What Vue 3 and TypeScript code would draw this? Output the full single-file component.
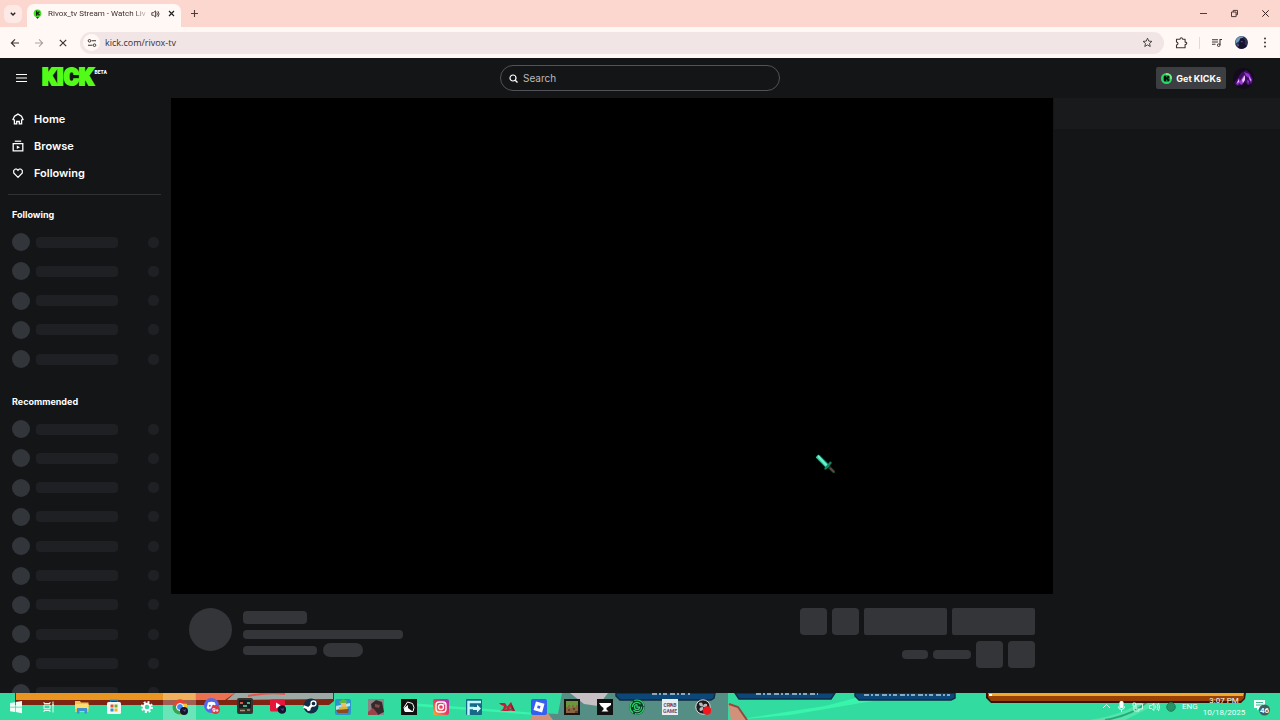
<script setup lang="ts">
import { ref } from 'vue'

const address = ref('kick.com/rivox-tv')
const query = ref('')

const followed = 5
const recommended = 10
</script>

<template>
  <div class="desktop">
    <div class="tabstrip">
      <button class="tab-search" aria-label="Search tabs">
        <svg width="8" height="8" viewBox="0 0 8 8"><path d="M1.8 2.8 4 5l2.2-2.2" fill="none" stroke="#222" stroke-width="1.4" /></svg>
      </button>
      <div class="tab">
        <svg class="favicon" width="9" height="10" viewBox="0 0 9 10">
          <circle cx="4.5" cy="4.4" r="3.8" fill="#3ee11f" />
          <path d="M3 1.8h1.3v1.4h1V2.4h1.3v1.4h-.9v1.2h.9v1.5H5.3v-1h-1v1.3H3z" fill="#10230c" />
          <path d="M3 8h3L4.5 10z" fill="#26361d" />
        </svg>
        <span class="tab-title">Rivox_tv Stream - Watch Liv</span>
        <button class="plain" aria-label="Mute tab">
          <svg width="9" height="8" viewBox="0 0 9 8"><path d="M.8 2.7h1.6L4.6.9v6.2L2.4 5.3H.8zM5.8 2.4q1.2 1.6 0 3.2M6.9 1.1q2.4 2.9 0 5.8" fill="none" stroke="#554b49" stroke-width="1" /></svg>
        </button>
        <button class="plain tab-close" aria-label="Close tab">
          <svg width="7" height="7" viewBox="0 0 7 7"><path d="m1 1 5 5m0-5L1 6" stroke="#222" stroke-width="1.2" /></svg>
        </button>
      </div>
      <button class="plain new-tab" aria-label="New tab">
        <svg width="9" height="9" viewBox="0 0 9 9"><path d="M4.5 1v7M1 4.5h7" stroke="#4c3b38" stroke-width="1.1" /></svg>
      </button>
      <div class="window-buttons">
        <button class="plain" aria-label="Minimize"><svg width="9" height="9" viewBox="0 0 9 9"><path d="M1 4.5h7" stroke="#4c3b38" /></svg></button>
        <button class="plain" aria-label="Restore"><svg width="9" height="9" viewBox="0 0 9 9"><path d="M1.5 3h4.6v4.6H1.5zM3.2 3V1.4h4.3v4.3H6.1" fill="none" stroke="#4c3b38" /></svg></button>
        <button class="plain" aria-label="Close"><svg width="9" height="9" viewBox="0 0 9 9"><path d="m1.3 1.3 6.4 6.4m0-6.4-6.4 6.4" stroke="#33211f" /></svg></button>
      </div>
    </div>

    <div class="toolbar">
      <div class="nav-buttons">
        <button class="plain" aria-label="Back"><svg width="10" height="10" viewBox="0 0 10 10"><path d="M9 5H1.6M5 1.4 1.4 5 5 8.6" fill="none" stroke="#3b3635" stroke-width="1.2" /></svg></button>
        <button class="plain" aria-label="Forward"><svg width="10" height="10" viewBox="0 0 10 10"><path d="M1 5h7.4M5 1.4 8.6 5 5 8.6" fill="none" stroke="#a9a4a3" stroke-width="1.1" /></svg></button>
        <button class="plain" aria-label="Stop"><svg width="10" height="10" viewBox="0 0 10 10"><path d="m1.8 1.8 6.4 6.4m0-6.4-6.4 6.4" stroke="#3b3635" stroke-width="1.2" /></svg></button>
      </div>
      <div class="omnibox">
        <button class="site-info" aria-label="Site information">
          <svg width="10" height="10" viewBox="0 0 10 10"><path d="M4.6 2.8H9M1 7.2h4.4" stroke="#3b3635" stroke-width="1.1" /><circle cx="2.5" cy="2.8" r="1.3" fill="none" stroke="#3b3635" /><circle cx="7.5" cy="7.2" r="1.3" fill="none" stroke="#3b3635" /></svg>
        </button>
        <input v-model="address" class="address" type="text" aria-label="Address" />
        <button class="plain" aria-label="Bookmark">
          <svg width="11" height="11" viewBox="0 0 11 11"><path d="m5.5 1.2 1.25 2.9 3.15.3-2.4 2.05.75 3.05L5.5 7.9 2.75 9.5l.75-3.05L1.1 4.4l3.15-.3z" fill="none" stroke="#3b3635" stroke-width=".9" /></svg>
        </button>
      </div>
      <button class="plain extensions" aria-label="Extensions">
        <svg width="13" height="12" viewBox="0 0 13 12"><path d="M1.5 2.2H5Q5.2.7 6.3.7T7.6 2.2h2.5v2.9q1.7.1 1.7 1.2t-1.7 1.3v3.2H1.5V8Q3 7.6 3 6.5T1.5 5z" fill="none" stroke="#3b3635" stroke-width="1.1" stroke-linejoin="round" /></svg>
      </button>
      <span class="toolbar-rule"></span>
      <div class="toolbar-end">
        <button class="plain" aria-label="Media controls">
          <svg width="12" height="10" viewBox="0 0 12 10"><path d="M1 1.7h6M1 4h6M1 6.3h3.5M9 7V1.5h2" fill="none" stroke="#3b3635" stroke-width="1.1" /><circle cx="7.7" cy="7.2" r="1.3" fill="none" stroke="#3b3635" /></svg>
        </button>
        <button class="plain" aria-label="Profile">
          <svg width="13" height="13" viewBox="0 0 13 13"><circle cx="6.5" cy="6.5" r="6.5" fill="#2c3154" /><path d="M1.2 3.5a6.5 6.5 0 0 1 8-2.900L6 3 3 6 .2 8z" fill="#6e9dc4" /><path d="M5 2.6 8 2l2 2.5-.5 3.5L12 10a6.5 6.5 0 0 1-9 1.5L4 8z" fill="#15132d" /><path d="m5.5 5 2.5.5-1 1zM2 8l2 1-1 1.5z" fill="#8b5bb8" /></svg>
        </button>
        <button class="plain" aria-label="Menu">
          <svg width="4" height="11" viewBox="0 0 4 11"><circle cx="2" cy="1.5" r="1" fill="#3b3635" /><circle cx="2" cy="5.5" r="1" fill="#3b3635" /><circle cx="2" cy="9.5" r="1" fill="#3b3635" /></svg>
        </button>
      </div>
    </div>

    <div class="site">
      <header class="site-header">
        <div class="brand">
          <button class="plain" aria-label="Toggle sidebar">
            <svg width="11" height="10" viewBox="0 0 11 10"><path d="M0 1.500h11M0 5h11M0 8.500h11" stroke="#fff" stroke-width="1.200" /></svg>
          </button>
          <a class="logo" href="#">KICK<sup>BETA</sup></a>
        </div>
        <label class="search">
          <svg width="9" height="9" viewBox="0 0 9 9"><circle cx="4" cy="4" r="3" fill="none" stroke="#fff" stroke-width="1.2" /><path d="m6.2 6.2 2.3 2.3" stroke="#fff" stroke-width="1.3" /></svg>
          <input v-model="query" type="search" placeholder="Search" aria-label="Search" />
        </label>
        <div class="account">
          <button class="get-kicks">
            <svg width="11" height="11" viewBox="0 0 11 11"><circle cx="5.5" cy="5.5" r="5.5" fill="#26dd62" /><path d="M5.5 0A5.5 5.5 0 0 1 11 5.5L8 7 4 3z" fill="#75f08a" /><circle cx="5.5" cy="5.5" r="3.6" fill="#15924c" /><path d="M3 2.7h2v1.6h.8v-.8h.8v-.8h1.700v2h-.8v1.500h.8v2H6.600v-.8h-.8v-.8H5v1.700H3z" fill="#07110b" /></svg>
            Get KICKs
          </button>
          <button class="plain" aria-label="Account">
            <svg width="21" height="21" viewBox="0 0 21 21"><circle cx="10.5" cy="10.5" r="10.5" fill="#140a1c" /><path d="m1 15 3-4 4-6 5-3 4 3 3 6-1 5-4 1-3-3-4 3-4 1z" fill="#3c1060" /><path d="m3 16 3-6 1 3 4-6 1 4-3 6-3-2-1 2zM11 4l5 2 3 6-1 3-2-5-3-2zM14 12l2 1-1 4z" fill="#9b35d8" /><path d="m4 15 2-4v3zM9 12l3-5v5l-2 3zM16 8l2 4-1 1z" fill="#eec5ff" /></svg>
          </button>
        </div>
      </header>

      <div class="site-body">
        <aside class="sidebar">
          <nav>
            <a href="#"><svg width="12" height="12" viewBox="0 0 12 12"><path d="M6 1.1 9.5 3.3 11 6.6 9.6 7v3.800H7.300V8.500H4.700v2.300H2.400V7L1 6.600l1.500-3.300z" fill="none" stroke="#fff" stroke-width="1.300" /></svg>Home</a>
            <a href="#"><svg width="12" height="12" viewBox="0 0 12 12"><path d="M2.8 1.2h6.4" stroke="#fff" stroke-width="1.2" /><path d="M1.2 3.7h9.6v7.2H1.2z" fill="none" stroke="#fff" stroke-width="1.3" /><path d="m4.8 5.5 3.2 1.8-3.2 1.8z" fill="#fff" /></svg>Browse</a>
            <a href="#"><svg width="12" height="12" viewBox="0 0 12 12"><path d="M6 10.3 1.7 5.9V3.4L3.3 2h1.4L6 3.3 7.3 2h1.4l1.6 1.4v2.5z" fill="none" stroke="#fff" stroke-width="1.2" /></svg>Following</a>
          </nav>
          <h2>Following</h2>
          <ul class="channels followed">
            <li v-for="n in followed" :key="n"><i class="dot"></i><i class="bar"></i><i class="count"></i></li>
          </ul>
          <h2>Recommended</h2>
          <ul class="channels recommended">
            <li v-for="n in recommended" :key="n"><i class="dot"></i><i class="bar"></i><i class="count"></i></li>
          </ul>
        </aside>

        <main class="stream">
          <div class="video"></div>
          <div class="details">
            <i class="bone avatar"></i>
            <div class="lines">
              <i class="bone name"></i>
              <i class="bone title"></i>
              <div class="tags"><i class="bone tag"></i><i class="bone pill"></i></div>
            </div>
            <div class="actions">
              <div class="action-row"><i class="bone square"></i><i class="bone square"></i><i class="bone wide"></i><i class="bone wide"></i></div>
              <div class="action-row"><i class="bone stat"></i><i class="bone stat long"></i><i class="bone square"></i><i class="bone square"></i></div>
            </div>
          </div>
        </main>

        <aside class="chat"><div class="chat-head"></div></aside>
      </div>
    </div>

    <footer class="taskbar">
      <svg class="wallpaper" viewBox="0 0 1280 27" preserveAspectRatio="none" aria-hidden="true">
        <rect width="1280" height="27" fill="#32dca0" />
        <path d="M410 10 550 21v2L400 12zM735 27l90-14 50-13h45L790 22z" fill="#39f5ac" />
        <path d="M1090 27q35-6 50-18l25-2-40 20z" fill="#55e5aa" />
        <path d="M1105 27q28-5 42-18" fill="none" stroke="#22ac7d" stroke-width="2" />
        <path d="M15 0h319v8l-5 4H15z" fill="#7d2412" />
        <path d="M16 0h179v7H16z" fill="#eb9521" />
        <path d="M195 0h40l-10 7h-30z" fill="#ed7050" />
        <path d="M235 0h98v6l-106 1z" fill="#9ca9a5" />
        <path d="M248 3q20-4 37-2" stroke="#e05a49" stroke-width="2" fill="none" />
        <path d="M562 0h166v27H530l8-7 20 1z" fill="#548e85" />
        <path d="m570 0 14 11 14 2 10-13z" fill="#c6bfc4" />
        <path d="M530 27q2-8 17-8l6 8zM728 11l10 4 8 12h-15z" fill="#d1917a" />
        <path d="m729 11 9 3 9 13" fill="none" stroke="#944b3d" stroke-width="2" />
        <path d="M616 0h99l-1 5-3 2h-91l-4-4zM735 0h100l-4 6h-92zM855 0h100v5l-4 2h-92l-4-4z" fill="#0c4779" stroke="#102a44" stroke-width="1.5" />
        <path d="M652 1h38M756 1h62M864 2h86" stroke="#8aa9be" stroke-width="2" stroke-dasharray="5 2 2 2 4 3" />
        <path d="M986 0h260l-1 6-4 4H991l-5-5z" fill="#351307" />
        <path d="M988 0h256v5l-3 3H991l-3-4z" fill="#9a4205" />
        <path d="M988 0h256l-1 3H990z" fill="#efaa2c" />
        <path d="M989 1h3v2h-3z" fill="#fff" />
      </svg>

      <div class="apps">
        <button aria-label="Start"><svg width="16" height="16" viewBox="0 0 16 16"><path d="m2 4 5-.8v4.500H2zM7.700 3l6.300-1v5.700H7.700zM2 8.400h5V13l-5-.8zM7.700 8.400H14v5.800L7.700 13z" fill="#f1fff9" /></svg></button>
        <button aria-label="Task view"><svg width="16" height="16" viewBox="0 0 16 16"><path d="M3 3v1.500h6V3M3 13v-1.500h6V13M3 6h6v3.800H3zM12 2.500v11M11 6h2" fill="none" stroke="#e1fff4" /></svg></button>
        <button aria-label="File Explorer"><svg width="16" height="16" viewBox="0 0 16 16"><path d="M1 2h5l1 1.500h7.500V13H1z" fill="#efc34c" /><path d="M1 5h13.500v5H1z" fill="#ffdc72" /><path d="M3 9h10v5.500h-2.500V12h-5v2.500H3z" fill="#3e91d0" /></svg></button>
        <button aria-label="Store"><svg width="16" height="16" viewBox="0 0 16 16"><path d="M4.500 4V1.300h7V4" fill="none" stroke="#237bb2" stroke-width="1.300" /><rect x="1" y="3" width="14" height="12" rx="1.500" fill="#f4f6f5" /><path d="M4.500 5.500h3v3h-3z" fill="#e4542b" /><path d="M8.500 5.500h3v3h-3z" fill="#70ad30" /><path d="M4.500 9.500h3v3h-3z" fill="#2a92d8" /><path d="M8.500 9.500h3v3h-3z" fill="#efb41f" /></svg></button>
        <button aria-label="Settings"><svg width="16" height="16" viewBox="0 0 16 16"><circle cx="8" cy="8" r="3.300" fill="none" stroke="#fff" stroke-width="2" /><circle cx="8" cy="8" r="5" fill="none" stroke="#fff" stroke-width="2" stroke-dasharray="1.960 1.960" /></svg></button>
        <button class="active" aria-label="Chrome"><svg width="16" height="16" viewBox="0 0 16 16"><circle cx="8" cy="8" r="7.500" fill="#35a64d" /><path d="M1.400 4.500a7.500 7.500 0 0 1 13.200 0H8L4.800 9.800z" fill="#e64534" /><path d="M14.800 4.800A7.500 7.500 0 0 1 8 15.500L11.500 9 9 4.800z" fill="#f9c32d" /><circle cx="8" cy="8" r="3.500" fill="#4587e8" stroke="#fff" /><circle cx="12" cy="12" r="4" fill="#17152e" /><path d="m10 10 2 1 2-1-1 3z" fill="#54508a" /></svg></button>
        <button class="running" aria-label="Discord"><svg width="16" height="16" viewBox="0 0 16 16"><circle cx="7.500" cy="7.500" r="7.500" fill="#5869e8" /><path d="M4 4.500q3.500-1.400 7 0l1.300 5.500-2 1.500-1-1H5.700l-1 1-2-1.500z" fill="#fff" /><circle cx="5.800" cy="7.800" r="1" fill="#5869e8" /><circle cx="9.200" cy="7.800" r="1" fill="#5869e8" /><circle cx="11.500" cy="11.500" r="4.500" fill="#d93e48" /><text x="11.500" y="13.700" text-anchor="middle" font-size="6" font-weight="700" fill="#fff">9+</text></svg></button>
        <button class="running" aria-label="Capture"><svg width="16" height="16" viewBox="0 0 16 16"><rect width="16" height="16" rx="2" fill="#34332f" /><rect x="2" y="2" width="12" height="8" fill="#171b1b" /><path d="M3 4h3v2H3z" fill="#db554b" /><path d="M10 4h3v2h-3zM6 7h4v2H6z" fill="#42b184" /><path d="M3 12.500h5M10 12h3" stroke="#a3987b" stroke-width="1.500" /></svg></button>
        <button class="running" aria-label="YouTube"><svg width="16" height="16" viewBox="0 0 16 16"><rect y="1.500" width="15" height="12" rx="1.500" fill="#e5173b" /><path d="m6 4.500 5 3-5 3z" fill="#fff" /><circle cx="12" cy="11.500" r="4.300" fill="#17152e" /><path d="m10 10 2 1 2-1-1 3z" fill="#54508a" /></svg></button>
        <button class="running" aria-label="Steam"><svg width="16" height="16" viewBox="0 0 16 16"><circle cx="8" cy="8" r="7.500" fill="#112d48" /><path d="m.6 8.500 5 2 4-4" fill="none" stroke="#fff" stroke-width="2.500" /><circle cx="10.500" cy="5.500" r="2.500" fill="#112d48" stroke="#fff" stroke-width="1.300" /><circle cx="5.700" cy="11" r="2" fill="#fff" /></svg></button>
        <button aria-label="Subway game"><svg width="16" height="16" viewBox="0 0 16 16"><rect width="16" height="16" rx="2" fill="#2994cf" /><path d="m1 7 14-3v3L1 11z" fill="#b9e6e9" /><path d="M4 3 8 0l4 2-1 3H5z" fill="#65b936" /><path d="M6 4h5v4H6z" fill="#efbe69" /><path d="m4 8 8-.5 1 3-9 1z" fill="#d7b635" /><path d="m1 11 13-1-1 4H3z" fill="#8b4921" /></svg></button>
        <button aria-label="Action game"><svg width="16" height="16" viewBox="0 0 16 16"><path d="M0 0h16v16H0z" fill="#8b8585" /><path d="m3 5 5-4 6 2 2 10-6 3-6-5z" fill="#35292d" /><path d="M0 13 5 9l5 6-2 1H0z" fill="#9a444a" /><path d="m7 5 5 1-1 3-4-1z" fill="#804d45" /></svg></button>
        <button aria-label="Notes"><svg width="16" height="16" viewBox="0 0 16 16"><path d="M0 0h16v16H0z" fill="#101112" /><path d="M3 8.500 6.500 3l5 1.500 1.500 4-1 4H4z" fill="none" stroke="#fff" /><path d="m3 9 4-3v3l4 3H4z" fill="#fff" /></svg></button>
        <button aria-label="Instagram"><svg width="16" height="16" viewBox="0 0 16 16"><defs><linearGradient id="ig" x1="0" y1="1" x2="1" y2="0"><stop offset="0" stop-color="#f9ae39" /><stop offset=".5" stop-color="#ea3a5f" /><stop offset="1" stop-color="#a331c5" /></linearGradient></defs><rect width="16" height="16" rx="2" fill="url(#ig)" /><rect x="3" y="3" width="10" height="10" rx="3" fill="none" stroke="#fff" stroke-width="1.300" /><circle cx="8" cy="8" r="2.500" fill="none" stroke="#fff" stroke-width="1.300" /><circle cx="11" cy="5" r=".8" fill="#fff" /></svg></button>
        <button aria-label="Flow"><svg width="16" height="16" viewBox="0 0 16 16"><rect width="16" height="16" rx="1" fill="#176887" /><path d="M2.500 16V3H15M2.500 9H8" fill="none" stroke="#bdf5ff" stroke-width="2.500" /><path d="M7 8h4V5.500L15 9.500l-4 4V11H7z" fill="#d7f7ff" /></svg></button>
        <button aria-label="Dragon"><svg width="16" height="16" viewBox="0 0 16 16"><path d="M0 4h6l2 3-2 4-5 1 3-2 1-3-3-1zM7 9l5-6 4 9h-3l-2-4-2 3zM3 12l7-3 4 2-5 1z" fill="#c32035" /><path d="m12 3 1 3 3 6-3-2z" fill="#731f32" /></svg></button>
        <button aria-label="Roblox"><svg width="16" height="16" viewBox="0 0 16 16"><rect width="16" height="16" rx="2" fill="#365ff0" /><path d="m5 2.500 8.500 2.300-2.400 8.700L2.500 11zm1.700 4-.6 2.500 2.700.8.700-2.700z" fill="#fff" fill-rule="evenodd" /></svg></button>
        <button aria-label="Minecraft"><svg width="16" height="16" viewBox="0 0 16 16"><path d="M0 0h16v16H0z" fill="#171615" /><path d="M2 2h12v12H2z" fill="#8a6540" /><path d="M2 2h12v4h-2v2h-2V6H8v3H6V6H4v2H2z" fill="#6b963a" /><path d="M4 10h2v2H4zM9 9h2v2H9zM11 12h3v2h-3z" fill="#5c402d" /></svg></button>
        <button aria-label="Forge"><svg width="16" height="16" viewBox="0 0 16 16"><path d="M0 0h16v16H0z" fill="#101112" /><path d="M2 4h12v2l-3 2-1.500 1v1.500l2 2H4.500l2-2V9L4 7z" fill="#fff" /></svg></button>
        <button aria-label="Spiral"><svg width="16" height="16" viewBox="0 0 16 16"><circle cx="8" cy="8" r="7.800" fill="#0b3d29" /><g fill="none" stroke="#32d26d" stroke-width="1.200"><circle cx="8" cy="8" r="7" stroke-dasharray="13 2" /><circle cx="8" cy="8" r="4.600" stroke-dasharray="11 3" /><path d="M8 5.500v2.700h2.500A2.500 2.500 0 1 1 8 5.500" /></g></svg></button>
        <button aria-label="Crab Game"><svg width="16" height="16" viewBox="0 0 16 16"><path d="M0 0h16v16H0z" fill="#e9eff0" /><text x="8" y="7.500" text-anchor="middle" font-size="5" font-weight="700" fill="#55516a">CRAB</text><text x="8" y="13.500" text-anchor="middle" font-size="5" font-weight="700" fill="#6c5074">GAME</text><path d="M7 4h2v3H7z" fill="#df4b68" /></svg></button>
        <button aria-label="OBS Studio"><svg width="16" height="16" viewBox="0 0 16 16"><circle cx="8" cy="8" r="7.200" fill="#1d1a20" stroke="#d8dcdd" /><path d="M4 4q4-2 4 3.500Q4 8 4 4M12 5q1 4-4 3 0-4 4-3M5 12q-2-4 3-4 1 4-3 4" fill="#b7babd" /><circle cx="12" cy="11.500" r="4.300" fill="#f3161c" /></svg></button>
      </div>

      <div class="tray">
        <svg width="9" height="9" viewBox="0 0 9 9"><path d="m1 6 3.500-3.500L8 6" fill="none" stroke="#dcfff1" /></svg>
        <svg width="9" height="11" viewBox="0 0 9 11"><rect x="2.500" width="4" height="7" rx="1.500" fill="#fff" /><path d="M1.500 5.500q0 3 3 3t3-3M4.500 8.500V11" fill="none" stroke="#fff" /></svg>
        <svg width="11" height="10" viewBox="0 0 11 10"><path d="M4 2h6.500v5H4zM1 1h2.500v3H1zM2 4v5h5M7 7v2" fill="none" stroke="#dcfff1" stroke-width=".9" /></svg>
        <svg width="11" height="10" viewBox="0 0 11 10"><path d="M.5 3.500h2L5 1.500v7L2.500 6.500h-2zM6.500 3.500q1 1.500 0 3M8 2q2 3 0 6M9.500 1q2 4 0 8" fill="none" stroke="#dcfff1" stroke-width=".9" /></svg>
        <svg width="10" height="10" viewBox="0 0 10 10"><circle cx="5" cy="5" r="4.300" fill="#269467" stroke="#1c8159" /></svg>
      </div>
      <span class="lang">ENG</span>
      <div class="clock"><span>3:07 PM</span><span>10/18/2025</span></div>
      <button class="plain notices" aria-label="46 notifications">
        <svg width="18" height="18" viewBox="0 0 18 18"><path d="M1 2h11v8H7l-3 2.500V10H1z" fill="#f4fffb" /><path d="M3 4.500h7M3 7h7" stroke="#42b68e" /><circle cx="11.500" cy="12" r="5.500" fill="#3b625d" /><text x="11.500" y="14.800" text-anchor="middle" font-size="8" font-weight="600" fill="#fff">46</text></svg>
      </button>
    </footer>

    <svg class="cursor" width="20" height="20" viewBox="0 0 20 20" aria-hidden="true">
      <path d="M1 1h3l9 9 2-2 1 1-2 3 5 5v2h-2l-5-5-3 2-1-1 2-2-9-9z" fill="#0b3f33" />
      <path d="m1 2 11 11" stroke="#22c99a" stroke-width="4" />
      <path d="m2 2 9 10" stroke="#6af5d0" stroke-width="2" />
      <path d="m15 8-6 7" stroke="#178564" stroke-width="2" />
      <path d="m14 14 4 4" stroke="#70412d" stroke-width="2" />
    </svg>
  </div>
</template>

<style>
body {
  margin: 0;
  background: #141517;
}
</style>

<style scoped>
* {
  box-sizing: border-box;
}

.desktop {
  position: relative;
  display: flex;
  flex-direction: column;
  height: 100vh;
  overflow: hidden;
  font-family: Inter, "Liberation Sans", sans-serif;
}

button {
  display: flex;
  align-items: center;
  justify-content: center;
  padding: 0;
  border: 0;
  font: inherit;
  color: inherit;
}

.plain {
  background: none;
}

svg {
  display: block;
  flex: none;
}

i {
  display: block;
  flex: none;
}

input {
  min-width: 0;
  padding: 0;
  border: 0;
  outline: 0;
  background: none;
  font: inherit;
  color: inherit;
}

/* browser frame */
.tabstrip {
  display: flex;
  flex: none;
  align-items: center;
  height: 27px;
  padding: 0 10px 0 4px;
  background: #fbd7d0;
  font-family: Roboto, "Open Sans", sans-serif;
}

.tab-search {
  width: 18px;
  height: 18px;
  border-radius: 6px;
  background: #fde9e5;
}

.tab {
  display: flex;
  align-items: center;
  align-self: flex-end;
  width: 154px;
  height: 23px;
  margin-left: 5px;
  padding: 0 7px 4px 6px;
  border-radius: 7px 7px 0 0;
  background: #fff8f5;
}

.tab-title {
  flex: 1;
  margin: 0 5px 0 6px;
  white-space: nowrap;
  font-size: 8px;
  line-height: 12px;
  color: #3b302e;
  mask-image: linear-gradient(to right, #000 85%, #0004);
}

.tab-close {
  margin-left: 8px;
}

.new-tab {
  margin-left: 9px;
}

.window-buttons {
  display: flex;
  gap: 22px;
  margin-left: auto;
}

.toolbar {
  display: flex;
  flex: none;
  align-items: center;
  height: 31px;
  padding: 0 13px 0 10px;
  background: #fff8f5;
  font-family: "Open Sans", "Noto Sans", sans-serif;
}

.nav-buttons {
  display: flex;
  gap: 14px;
}

.omnibox {
  display: flex;
  flex: 1;
  align-items: center;
  height: 22px;
  margin-left: 12px;
  padding: 0 11px 0 3px;
  border-radius: 11px;
  background: #f1e5e6;
}

.site-info {
  width: 17px;
  height: 17px;
  border-radius: 50%;
  background: #fff8f5;
}

.address {
  flex: 1;
  margin-left: 5px;
  font-size: 9px;
  line-height: 14px;
  color: #3b3032;
}

.extensions {
  margin-left: 11px;
}

.toolbar-rule {
  width: 1px;
  height: 12px;
  margin: 0 11px;
  background: #eed4d2;
}

.toolbar-end {
  display: flex;
  gap: 12px;
  align-items: center;
}

.toolbar-end button:last-child {
  margin-left: 3px;
}

/* site */
.site {
  display: flex;
  flex: 1;
  flex-direction: column;
  min-height: 0;
  background: #141517;
  color: #fff;
}

.site-header {
  display: grid;
  flex: none;
  grid-template-columns: 1fr 280px 1fr;
  align-items: center;
  height: 40px;
  padding: 0 16px;
}

.brand {
  display: flex;
  gap: 15px;
  align-items: center;
}

.logo {
  display: flex;
  font-family: Roboto, Inter, sans-serif;
  font-size: 23px;
  font-weight: 900;
  line-height: 24px;
  color: #53fc18;
  text-decoration: none;
  -webkit-text-stroke: 2px #53fc18;
}

.logo sup {
  margin-left: 1px;
  font-size: 5px;
  line-height: 12px;
  color: #fff;
  -webkit-text-stroke: 0;
}

.search {
  display: flex;
  gap: 5px;
  align-items: center;
  height: 26px;
  padding: 0 8px;
  border: 1px solid #515356;
  border-radius: 13px;
  font-size: 10px;
}

.search input {
  flex: 1;
}

.search input::placeholder {
  color: #b9bbbd;
  opacity: 1;
}

.account {
  display: flex;
  gap: 7px;
  align-items: center;
  justify-content: flex-end;
  padding-right: 10px;
}

.get-kicks {
  gap: 4px;
  height: 22px;
  padding: 0 5px;
  border-radius: 2px;
  background: #3c3e41;
  font-size: 9px;
  font-weight: 700;
  white-space: nowrap;
}

.site-body {
  display: flex;
  flex: 1;
  min-height: 0;
  overflow: hidden;
}

.sidebar {
  display: flex;
  flex: none;
  flex-direction: column;
  width: 171px;
  padding: 7px 10px 0 8px;
}

nav {
  display: flex;
  flex: none;
  flex-direction: column;
  padding: 0 4px 8px;
  border-bottom: 1px solid #303235;
}

nav a {
  display: flex;
  gap: 10px;
  align-items: center;
  height: 27px;
  font-size: 11px;
  font-weight: 600;
  color: #fff;
  text-decoration: none;
}

h2 {
  flex: none;
  margin: 13px 4px 11px;
  font-size: 9px;
  font-weight: 700;
  line-height: 14px;
}

.channels {
  display: flex;
  flex: none;
  flex-direction: column;
  justify-content: space-between;
  margin: 0;
  padding: 0 2px 0 4px;
  list-style: none;
}

.followed {
  height: 135px;
  margin-bottom: 14px;
}

.recommended {
  height: 282px;
}

.channels li {
  display: flex;
  align-items: center;
  height: 18px;
}

.dot {
  width: 18px;
  height: 18px;
  border-radius: 50%;
  background: #32353a;
}

.bar {
  width: 82px;
  height: 11px;
  margin-left: 6px;
  border-radius: 4px;
  background: #1f2023;
}

.count {
  width: 11px;
  height: 11px;
  margin-left: auto;
  border-radius: 5px;
  background: #1f2023;
}

.stream {
  flex: 1;
  min-width: 0;
}

.video {
  aspect-ratio: 16 / 9;
  background: #000;
}

.details {
  display: flex;
  gap: 11px;
  padding: 14px 18px;
}

.bone {
  border-radius: 4px;
  background: #343538;
}

.avatar {
  width: 43px;
  height: 43px;
  border-radius: 50%;
}

.lines {
  display: flex;
  flex-direction: column;
  padding-top: 3px;
}

.name {
  width: 64px;
  height: 13px;
}

.title {
  width: 160px;
  height: 9px;
  margin-top: 6px;
}

.tags {
  display: flex;
  gap: 6px;
  align-items: center;
  margin-top: 4px;
}

.tag {
  width: 74px;
  height: 9px;
}

.pill {
  width: 40px;
  height: 14px;
  border-radius: 7px;
}

.actions {
  display: flex;
  flex-direction: column;
  gap: 6px;
  margin-left: auto;
}

.action-row {
  display: flex;
  gap: 5px;
  align-items: center;
  justify-content: flex-end;
}

.square {
  width: 27px;
  height: 27px;
}

.wide {
  width: 83px;
  height: 27px;
  border-radius: 2px;
}

.stat {
  width: 26px;
  height: 9px;
}

.long {
  width: 38px;
}

.chat {
  flex: none;
  width: 227px;
  padding-left: 1px;
}

.chat-head {
  height: 31px;
  background: #191a1c;
}

/* taskbar */
.taskbar {
  position: relative;
  display: flex;
  flex: none;
  align-items: center;
  height: 27px;
  padding-right: 9px;
  font-family: Roboto, "Open Sans", sans-serif;
  color: #f1fff9;
}

.wallpaper {
  position: absolute;
  inset: 0;
  width: 100%;
  height: 100%;
}

.apps {
  position: relative;
  display: flex;
  width: 719px;
  height: 27px;
}

.apps button {
  flex: 1;
  background: none;
}

.apps .active {
  background: #ffffff45;
}

.apps .running {
  border-bottom: 1px solid #68bdde;
}

.tray {
  position: relative;
  display: flex;
  gap: 6px;
  align-items: center;
  margin-left: auto;
}

.lang {
  position: relative;
  width: 17px;
  margin-left: 6px;
  font-size: 8px;
}

.clock {
  position: relative;
  display: flex;
  flex-direction: column;
  align-items: center;
  width: 42px;
  margin: 0 8px 0 4px;
  font-size: 8px;
  line-height: 12px;
}

.notices {
  position: relative;
}

.cursor {
  position: absolute;
  top: 454px;
  left: 816px;
}
</style>
